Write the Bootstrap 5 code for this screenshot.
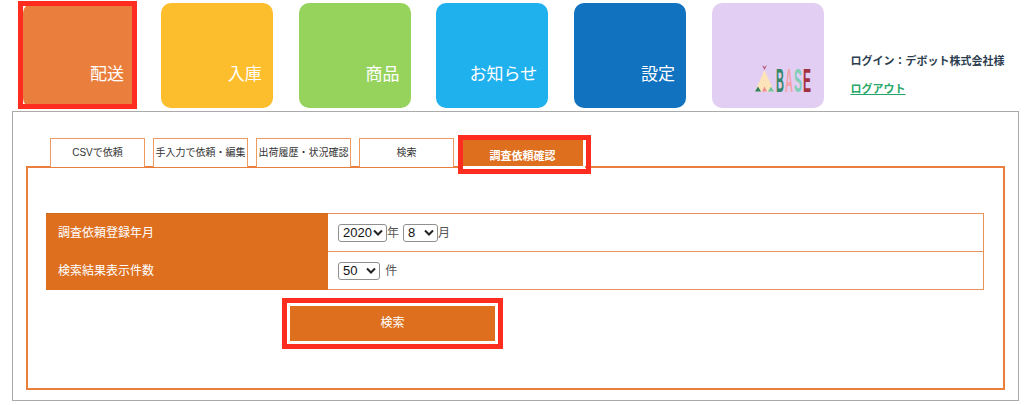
<!DOCTYPE html>
<html lang="ja">
<head>
    <meta charset="UTF-8">
    <meta name="viewport" content="width=device-width, initial-scale=1.0">
    <title>調査依頼確認</title>
    <link rel="stylesheet" href="https://cdn.jsdelivr.net/npm/bootstrap@5.3.0/dist/css/bootstrap.min.css">
    <style>
        body { font-family: "Liberation Sans", "Noto Sans CJK JP", sans-serif; color: #333; background: #fff; }
        .top-menu { height: 111px; padding: 3px 0 0 23px; gap: 25.75px; }
        .menu-tile { position: relative; display: flex; align-items: flex-end; justify-content: flex-end; flex: none; width: 112px; height: 105px; padding: 0 11px 24px 0; border-radius: 10px; color: #fff; font-size: 17px; line-height: 18px; text-decoration: none; }
        .tile-ship { background: #ea7e3d; }
        .tile-stock { background: #fdbe2d; }
        .tile-item { background: #96d35c; }
        .tile-news { background: #1fb1ee; }
        .tile-config { background: #1172bf; }
        .tile-base { background: #e2ceF2; padding: 0; }
        .red-frame { position: absolute; border: 5px solid #ff2c20; pointer-events: none; }
        .tile-ship .red-frame { left: -5px; top: -2px; width: 119px; height: 108px; }
        .login-box { margin: 50px 0 0 1px; font-size: 11px; font-weight: 700; color: #2c3e50; line-height: 16px; }
        .login-box a { display: inline-block; margin-top: 12px; color: #27a869; }
        .main-panel { width: 1007px; height: 290px; margin-left: 12px; padding: 26px 13px 0; border: 1px solid #aaa; }
        .tab-row { height: 28px; padding-left: 24px; gap: 8px; }
        .tab-item { display: flex; align-items: center; justify-content: center; width: 95px; height: 29px; padding-bottom: 2px; border: 1px solid #ee9a60; border-bottom: 0; background: #fff; color: #333; font-size: 10px; text-decoration: none; white-space: nowrap; }
        .tab-item.is-current { position: relative; width: 123px; height: 30px; border: 0; border-right: 2px solid #fff; border-bottom: 2px solid #fff; background: #dd6f1f; color: #fff; font-size: 11px; font-weight: 700; padding: 8px 0 0; }
        .tab-item.is-current .red-frame { left: -4px; top: -3px; width: 133px; height: 39px; }
        .order-box { height: 224px; padding: 45px 18px 0; border: 2px solid #e97f3c; }
        .search-table { width: 938px; margin: 0; border-collapse: collapse; font-size: 12px; }
        .search-table th { width: 281px; height: 38px; padding: 0 0 0 11px; border: 1px solid #dd6f1f; border-top-color: #d4691c; background: #dd6f1f; color: #fff; font-weight: 400; vertical-align: middle; }
        .search-table td { height: 38px; padding: 0 0 0 10px; border: 1px solid #e9925a; color: #555; vertical-align: middle; }
        .search-table select { appearance: none; height: 18px; padding: 0 0 0 4px; border: 1px solid #8f8f8f; border-radius: 3px; background: #fff url("data:image/svg+xml,%3Csvg xmlns='http://www.w3.org/2000/svg' width='10' height='7'%3E%3Cpath d='M1 1.5l4 4 4-4' fill='none' stroke='%23222' stroke-width='2'/%3E%3C/svg%3E") no-repeat right 3px center; color: #111; font-family: "Liberation Sans", sans-serif; font-size: 13px; line-height: 16px; }
        .sel-year { width: 49px; }
        .sel-month { width: 35px; margin-left: 4px; }
        .sel-count { width: 42px; margin-right: 2px; }
        .search-btn-wrap { padding: 15px 0 0 244px; }
        .search-btn { position: relative; display: block; width: 205px; height: 36px; padding: 0; border: 0; border-radius: 0; background: #dd6f1f; color: #fff; font-size: 12px; }
        .search-btn:hover { background: #dd6f1f; color: #fff; }
        .search-btn .red-frame { left: -8px; top: -7px; width: 221px; height: 51px; box-shadow: inset 0 0 0 3px #fff; }
    </style>
</head>
<body>
<!-- Top menu -->
<div class="top-menu d-flex align-items-start">
    <a href="#" class="menu-tile tile-ship">配送<span class="red-frame"></span></a>
    <a href="#" class="menu-tile tile-stock">入庫</a>
    <a href="#" class="menu-tile tile-item">商品</a>
    <a href="#" class="menu-tile tile-news">お知らせ</a>
    <a href="#" class="menu-tile tile-config">設定</a>
    <a href="#" class="menu-tile tile-base">
        <svg width="112" height="105" viewBox="0 0 112 105">
            <path d="M52.5 67 L43 88.5 H62 Z" fill="#fde4b8"/>
            <path d="M50 62 L52.5 67 L55 62 L52.5 64 Z" fill="#b8577f"/>
            <path d="M43 88.5 l3-5 3 5Z" fill="#2f7f5f"/>
            <path d="M50 88.5 l2.5-5 2.5 5Z" fill="#ef8d95"/>
            <path d="M56 88.5 l3-5 3 5Z" fill="#6fc4a4"/>
            <g font-size="33" font-weight="700" font-family="Liberation Sans">
                <text x="64" y="89" fill="#37866a" textLength="8" lengthAdjust="spacingAndGlyphs">B</text>
                <text x="73" y="89" fill="#f2a3ab" textLength="8" lengthAdjust="spacingAndGlyphs">A</text>
                <text x="82" y="89" fill="#80cdb8" textLength="8" lengthAdjust="spacingAndGlyphs">S</text>
                <text x="91" y="89" fill="#a3303f" textLength="8" lengthAdjust="spacingAndGlyphs">E</text>
            </g>
        </svg>
    </a>
    <div class="login-box">
        ログイン：デボット株式会社様<br>
        <a href="#">ログアウト</a>
    </div>
</div>

<!-- Main panel -->
<div class="main-panel">
    <div class="tab-row d-flex">
        <a href="#" class="tab-item">CSVで依頼</a>
        <a href="#" class="tab-item">手入力で依頼・編集</a>
        <a href="#" class="tab-item">出荷履歴・状況確認</a>
        <a href="#" class="tab-item">検索</a>
        <a href="#" class="tab-item is-current">調査依頼確認<span class="red-frame"></span></a>
    </div>
    <div class="order-box">
        <table class="search-table">
            <tr>
                <th>調査依頼登録年月</th>
                <td>
                    <select class="sel-year"><option>2020</option></select>年<select class="sel-month"><option>8</option></select>月
                </td>
            </tr>
            <tr>
                <th>検索結果表示件数</th>
                <td>
                    <select class="sel-count"><option>50</option></select> 件
                </td>
            </tr>
        </table>
        <div class="search-btn-wrap">
            <button type="button" class="btn search-btn">検索<span class="red-frame"></span></button>
        </div>
    </div>
</div>

<script src="https://cdn.jsdelivr.net/npm/bootstrap@5.3.0/dist/js/bootstrap.bundle.min.js"></script>
</body>
</html>
